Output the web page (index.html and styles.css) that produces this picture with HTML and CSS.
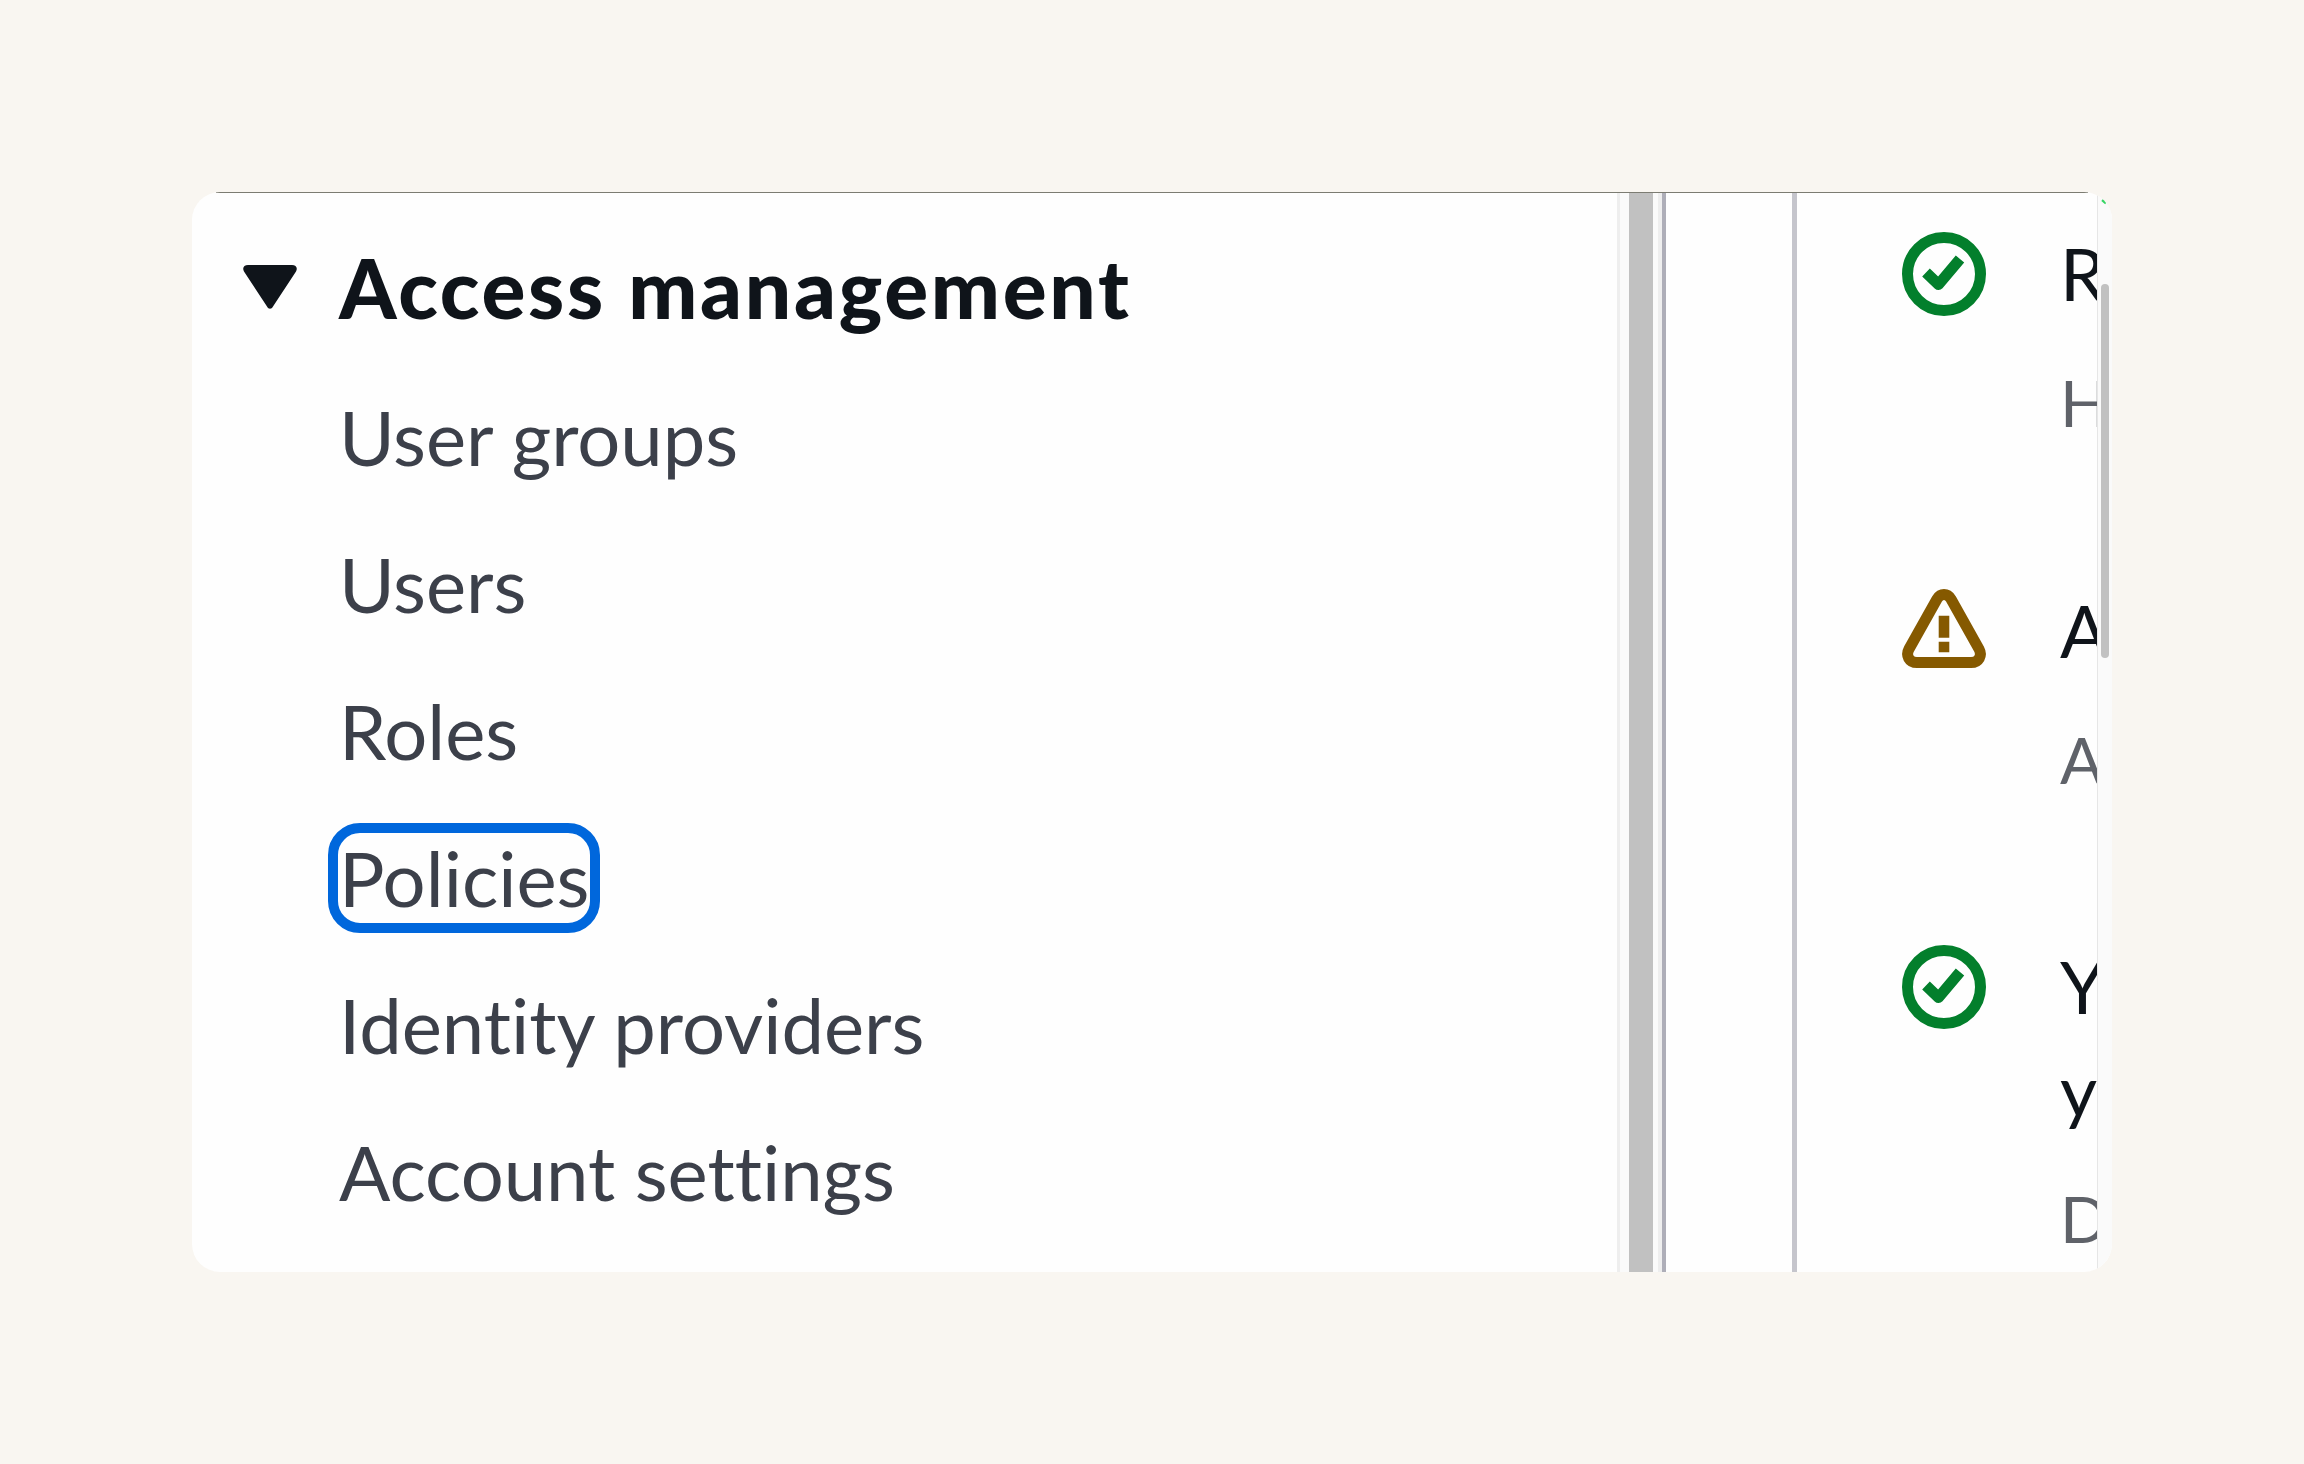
FILE: index.html
```html
<!DOCTYPE html>
<html lang="en">

<head>
    <meta charset="UTF-8">
    <title>Access management</title>
    <link rel="stylesheet" href="styles.css">
</head>

<body>
    <div class="card">
        <div class="top-line"></div>
        <div class="card-body">
            <nav class="side-nav">
                <div class="nav-heading">
                    <svg class="caret" viewBox="0 0 54 44"><path d="M5 0H49C53 0 55 3 53 6.500L30 41.500C28.500 44.500 25.500 44.500 24 41.500L1 6.500C-1 3 1 0 5 0Z"/></svg>
                    <span>Access management</span>
                </div>
                <a class="nav-link">User groups</a>
                <a class="nav-link">Users</a>
                <a class="nav-link">Roles</a>
                <a class="nav-link focused">Policies</a>
                <a class="nav-link">Identity providers</a>
                <a class="nav-link">Account settings</a>
            </nav>

            <div class="divider">
                <div class="stripe-light"></div>
                <div class="stripe-pale"></div>
                <div class="stripe-grey"></div>
                <div class="stripe-pale2"></div>
                <div class="stripe-light2"></div>
                <div class="stripe-dark"></div>
            </div>
            <div class="gap-col"></div>

            <div class="notices">
                <div class="notice">
                    <svg class="notice-icon" viewBox="0 0 84 84"><circle class="ok-line" cx="42" cy="42" r="36.500"/><path class="ok-line" d="M24 40.500L36.500 52.500L58 27"/></svg>
                    <div class="notice-text">
                        <div class="notice-title">R</div>
                        <div class="notice-sub">H</div>
                    </div>
                </div>
                <div class="notice">
                    <svg class="notice-icon warn" viewBox="0 0 84 79"><path class="warn-line" d="M42 5.500C38.500 5.500 36.500 7.500 35 10L7 60C3.500 66.500 7 73.500 15 73.500H69C77 73.500 80.500 66.500 77 60L49 10C47.500 7.500 45.500 5.500 42 5.500Z"/><path class="warn-fill" d="M36.700 26.700H47.300V48.700H36.700ZM36.700 52.700H47.300V63.300H36.700Z"/></svg>
                    <div class="notice-text">
                        <div class="notice-title">A</div>
                        <div class="notice-sub">A</div>
                    </div>
                </div>
                <div class="notice">
                    <svg class="notice-icon" viewBox="0 0 84 84"><circle class="ok-line" cx="42" cy="42" r="36.500"/><path class="ok-line" d="M24 40.500L36.500 52.500L58 27"/></svg>
                    <div class="notice-text">
                        <div class="notice-title">Y</div>
                        <div class="notice-title">y</div>
                        <div class="notice-sub">D</div>
                    </div>
                </div>
            </div>

            <div class="scrollbar">
                <div class="speck"></div>
                <div class="thumb"></div>
            </div>
        </div>
    </div>
</body>

</html>
```
FILE: styles.css
```css
body {
    margin: 0;
    background-color: #f9f6f1;
    font-family: Lato, "Noto Sans", sans-serif;
    font-variant-ligatures: none;
}

.card {
    width: 1920px;
    height: 1080px;
    margin: 192px 0 0 192px;
    background-color: #fefefe;
    border-radius: 28px;
    overflow: hidden;
    display: flex;
    flex-direction: column;
}

.top-line {
    height: 1px;
    margin: 0 24px;
    background-color: #7c7c72;
    flex-shrink: 0;
}

.card-body {
    flex: 1;
    display: flex;
    min-height: 0;
}

.side-nav {
    width: 1425px;
    flex-shrink: 0;
    display: flex;
    flex-direction: column;
    align-items: flex-start;
    padding: 50px 0 0 51px;
    box-sizing: border-box;
}

.nav-heading {
    display: flex;
    align-items: center;
    height: 88px;
    margin-bottom: 61.500px;
    font-size: 82px;
    font-weight: 900;
    letter-spacing: 2.700px;
    color: #0f141a;
    white-space: nowrap;
}

.caret {
    width: 54px;
    height: 44px;
    margin-right: 42px;
    fill: #0f141a;
}

.nav-link {
    height: 87px;
    margin-bottom: 60px;
    margin-left: 96px;
    line-height: 87px;
    font-size: 76px;
    color: #3c404a;
    white-space: nowrap;
}

.focused {
    height: 90px;
    margin-left: 85px;
    margin-top: -11px;
    margin-bottom: 48px;
    padding: 0 1px;
    line-height: 90px;
    border: 10px solid #0067dc;
    border-radius: 32px;
}

.divider {
    display: flex;
    flex-shrink: 0;
}

.stripe-light { width: 3px; background-color: #eeeeee; }
.stripe-pale { width: 9px; background-color: #fafafa; }
.stripe-grey { width: 24px; background-color: #c1c1c1; }
.stripe-pale2 { width: 5px; background-color: #fafafa; }
.stripe-light2 { width: 4px; background-color: #eeeeee; }
.stripe-dark { width: 4px; background-color: #aeaeb8; }

.gap-col {
    width: 126px;
    flex-shrink: 0;
    border-right: 5px solid #c5c5cc;
}

.notices {
    flex: 1;
    overflow: hidden;
    padding: 39px 0 0 105px;
    display: flex;
    flex-direction: column;
}

.notice {
    display: flex;
    align-items: flex-start;
    gap: 74px;
    height: 356.500px;
    flex-shrink: 0;
}

.notice-icon {
    width: 84px;
    height: 84px;
    flex-shrink: 0;
}

.warn {
    height: 79px;
}

.notice-text {
    margin-top: -10px;
}

.ok-line {
    fill: none;
    stroke: #037f2c;
    stroke-width: 11;
    stroke-linejoin: round;
}

.warn-line {
    fill: none;
    stroke: #855900;
    stroke-width: 11;
}

.warn-fill {
    fill: #855900;
}

.notice-title {
    font-size: 72px;
    line-height: 103px;
    color: #0f141a;
}

.notice-sub {
    font-size: 64px;
    line-height: 80px;
    margin-top: 38px;
    color: #5f6269;
}

.scrollbar {
    width: 15px;
    flex-shrink: 0;
    box-sizing: border-box;
    border-left: 1px solid #e6e6e6;
    background-color: #fafafa;
    padding: 6px 3px 0 3px;
}

.speck {
    width: 5px;
    height: 4px;
    margin-left: 1px;
    background-color: #35d463;
    transform: rotate(40deg);
}

.thumb {
    width: 8px;
    height: 374px;
    margin-top: 81px;
    border-radius: 4px;
    background-color: #c1c1c1;
}
```
